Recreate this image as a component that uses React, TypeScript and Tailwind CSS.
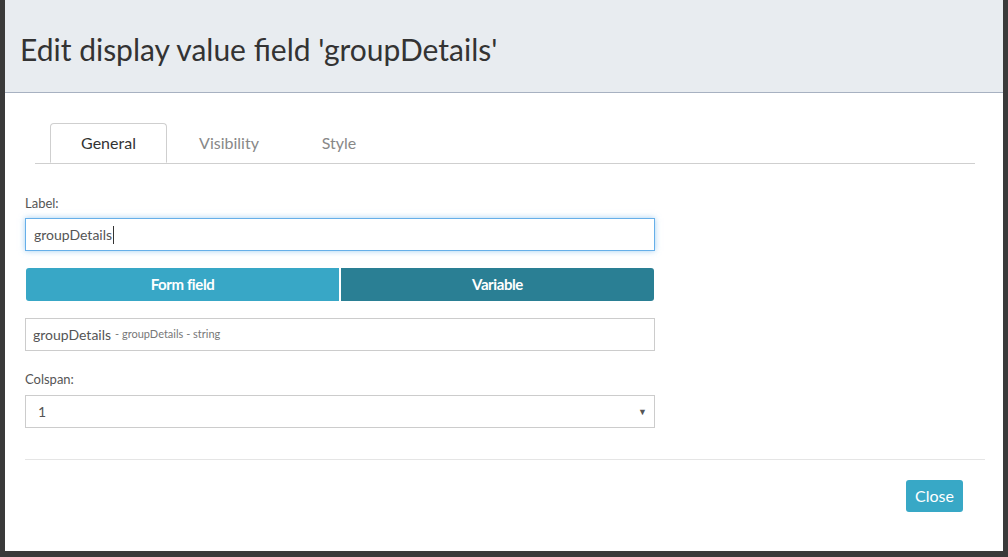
export default function App() {
  return (
    <div className="h-[557px] w-[1008px] bg-[#3a3a3a] pl-[5px] pr-[5px] font-['Lato','Liberation_Sans',sans-serif]">
      <div className="flex h-[551px] w-[998px] flex-col bg-white">
        <div className="flex h-[93px] items-center border-b border-[#a7b1c1] bg-[#e8ecf0] px-[15px] pt-[6px]">
          <h1 className="text-[30px] leading-none text-[#333]">Edit display value field 'groupDetails'</h1>
        </div>

        <div className="pl-[20px] pr-[18px] pt-[30px]">
          <div className="mx-[10px] flex border-b border-[#cfcfcf] pl-[15px]">
            <div className="-mb-px flex h-[40px] w-[117px] items-center justify-center rounded-t-[4px] border border-b-white border-[#cfcfcf] bg-white text-[16px] text-[#333]">
              General
            </div>
            <div className="flex h-[40px] w-[124px] items-center justify-center text-[16px] text-[#888]">Visibility</div>
            <div className="flex h-[40px] w-[96px] items-center justify-center text-[16px] text-[#888]">Style</div>
          </div>

          <div className="w-[630px] pt-[33px]">
            <label className="block text-[13px] leading-none text-[#555]">Label:</label>
            <div className="mt-[8px] flex h-[33px] items-center border border-[#66afe9] px-[8px] text-[14px] text-[#555] shadow-[0_0_6px_rgba(102,175,233,0.6)]">
              groupDetails<span className="ml-px h-[18px] w-px bg-[#333]" />
            </div>

            <div className="mt-[17px] flex h-[33px] gap-[2px] px-px">
              <button className="flex-1 rounded-l-[3px] bg-[#38a7c6] text-[15px] font-bold tracking-[-0.4px] text-white">
                Form field
              </button>
              <button className="flex-1 rounded-r-[3px] bg-[#2a7f94] text-[15px] font-bold tracking-[-0.4px] text-white">
                Variable
              </button>
            </div>

            <div className="mt-[17px] flex h-[33px] items-center border border-[#ccc] px-[7px] text-[14px] text-[#555]">
              groupDetails<span className="ml-[4px] text-[11px] text-[#777]">- groupDetails - string</span>
            </div>

            <label className="mt-[22px] block text-[13px] leading-none text-[#555]">Colspan:</label>
            <div className="mt-[9px] flex h-[33px] items-center justify-between border border-[#ccc] pl-[12px] pr-[7px] text-[14px] text-[#555]">
              <span>1</span>
              <span className="text-[9px] text-[#555]">▼</span>
            </div>
          </div>

          <div className="mt-[31px] border-t border-[#e5e5e5]" />
          <div className="flex justify-end pr-[22px] pt-[20px]">
            <button className="h-[32px] w-[57px] rounded-[3px] bg-[#38a8c6] text-[16px] text-white">Close</button>
          </div>
        </div>
      </div>
    </div>
  );
}
